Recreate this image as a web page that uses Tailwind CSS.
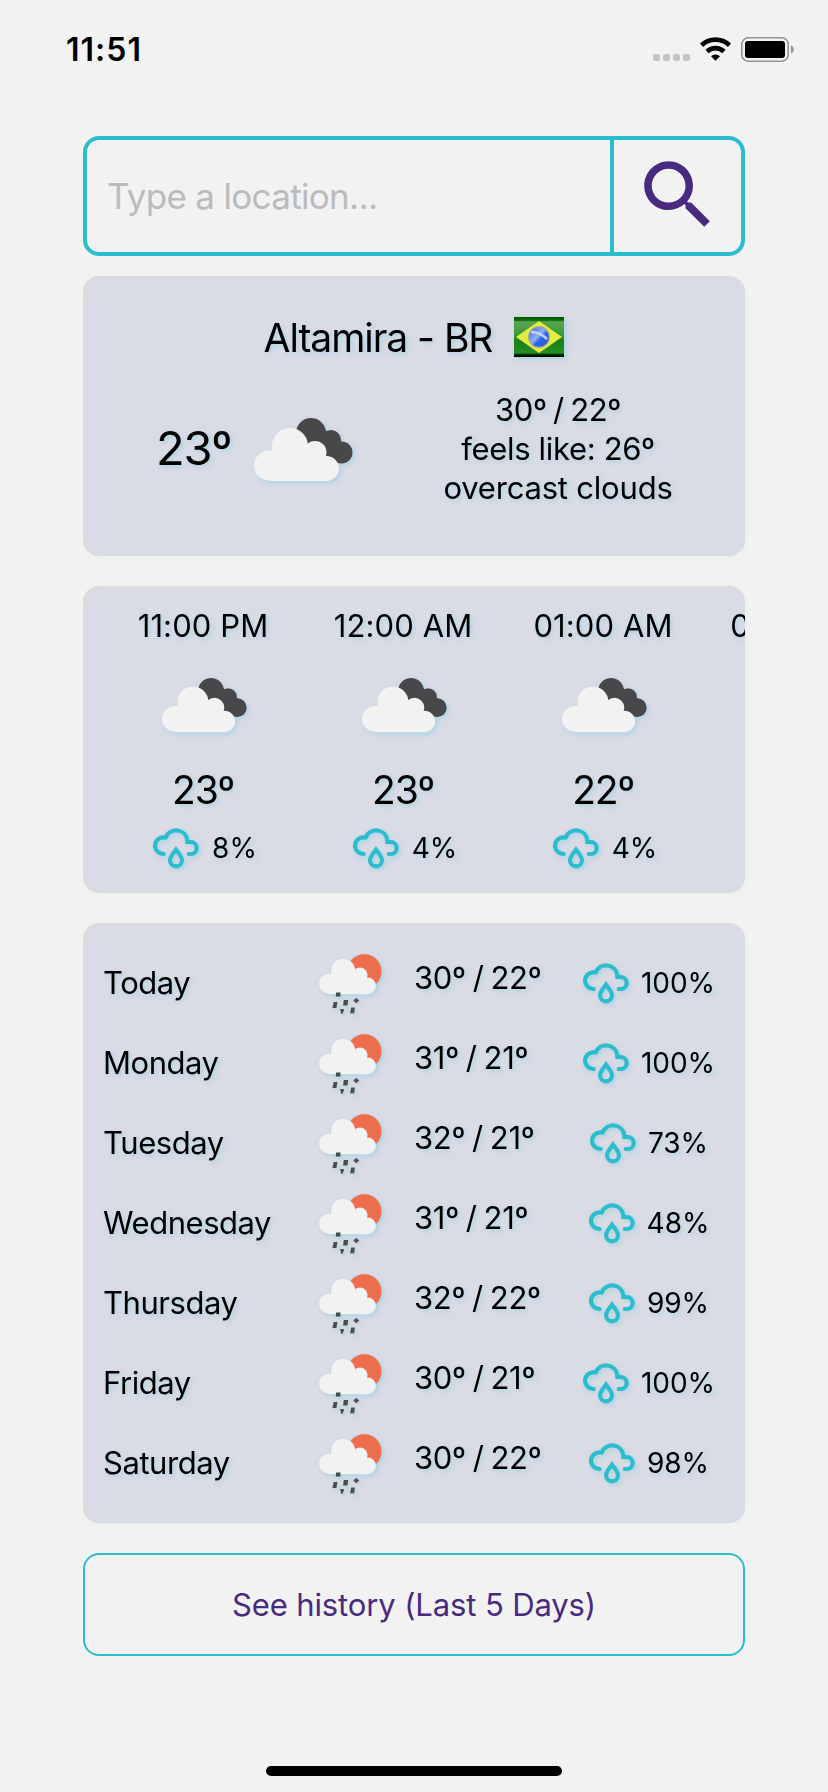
<!DOCTYPE html>
<html lang="en">
<head>
<meta charset="utf-8">
<title>Weather</title>
<script src="https://cdn.jsdelivr.net/npm/@tailwindcss/browser@4"></script>
</head>
<body class="bg-[#f2f2f2]">
<svg class="hidden">
  <symbol id="cloud" viewBox="0 0 100 64">
    <circle cx="15" cy="47.5" r="15"/><circle cx="36" cy="28" r="18"/><circle cx="61" cy="34.5" r="11.5"/><circle cx="72.5" cy="50.5" r="12.5"/>
    <path d="M15 63H73L71 38 60 28 36 26 15 34z"/>
  </symbol>
  <symbol id="overcast" viewBox="0 0 100 64">
    <g fill="#48484a"><circle cx="57" cy="15" r="15"/><circle cx="77" cy="22" r="10"/><circle cx="87.5" cy="34.500" r="11"/><path d="M57 2L71 12 86 22 90 26 86 45 74 40 50 26z"/></g>
    <use href="#cloud" width="100" height="64" fill="#f2f2f2"/>
  </symbol>
  <symbol id="sunrain" viewBox="0 0 100 100">
    <circle cx="67.6" cy="29" r="25.7" fill="#ec6e4c"/>
    <use href="#cloud" width="100" height="64" fill="#f2f2f2"/>
    <g fill="#4c4c4f"><path d="M25.500 60.500h6.500v6h-7zM22 74.500h5.500l-1.500 9h-6zM37 71.500h6.500l-1 8.500h-6.500zM54 69h3v2h2.500v3h-2.500v2h-3v-2h-2.500v-3h2.500zM31.500 85h5.500v3l-2 4h-2zM48 83h5.500l-1 8.500h-6z"/></g>
  </symbol>
  <symbol id="drop" viewBox="0 0 138 126">
    <g fill="none" stroke="#2bbdce" stroke-width="12.500"><path stroke-linecap="round" d="M32 81H31A25 25 0 0 1 31 31H38A34 34 0 0 1 103 40V45H113A18 18 0 0 1 113 81H107"/><path d="M69 68C61 80 51 88 51 100a18 18 0 0 0 36 0C87 88 77 80 69 68z"/></g>
  </symbol>
</svg>
<div class="flex h-[1792px] w-[828px] flex-col items-center overflow-hidden bg-[#f2f2f2] font-['Inter',sans-serif] text-black">
  <div class="flex h-[136px] w-full shrink-0 items-start justify-between pl-[66px] pr-[34px]">
    <div class="mt-[30px] text-[32px] leading-10 font-semibold tracking-[1px]">11:51</div>
    <div class="mt-[37px] flex h-[25px]">
      <div class="mt-[17px] mr-[10px] flex gap-[3px]"><i class="size-[7px] rounded-[2px] bg-[#c4c4c4]"></i><i class="size-[7px] rounded-[2px] bg-[#c4c4c4]"></i><i class="size-[7px] rounded-[2px] bg-[#c4c4c4]"></i><i class="size-[7px] rounded-[2px] bg-[#c4c4c4]"></i></div>
      <svg class="mr-[10px] h-6 w-[31px]" viewBox="0 0 31 24"><g fill="none" stroke="#000" stroke-width="4.600"><path d="M1.500 8.200A20.500 20.500 0 0 1 29.500 8.200"/><path d="M7 14.500A12.400 12.400 0 0 1 24 14.500"/></g><path d="M11 19.300A6.600 6.600 0 0 1 20 19.300L15.500 23.800z"/></svg>
      <svg class="h-[25px] w-[53px]" viewBox="0 0 53 25"><rect x=".8" y=".8" width="46.400" height="23.400" rx="6.500" fill="none" stroke="#939393" stroke-width="1.600"/><rect x="4" y="4" width="40" height="17" rx="3"/><path d="M50 8.500a4 4.200 0 0 1 0 8z" fill="#939393"/></svg>
    </div>
  </div>
  <div class="flex h-[120px] w-[662px] shrink-0 rounded-[16px] border-4 border-[#2bbdce]">
    <div class="flex w-[523px] items-center pl-[20px] text-[35px] tracking-[-0.68px] text-[#bbbbbd]">Type a location...</div>
    <div class="flex flex-1 justify-center border-l-4 border-[#2bbdce] pt-[10px]">
      <svg class="size-[90px]" viewBox="0 0 24 24" fill="#482b80"><path d="M15.500 14h-.79l-.28-.27C15.410 12.590 16 11.110 16 9.500 16 5.910 13.090 3 9.500 3S3 5.910 3 9.500 5.910 16 9.500 16c1.610 0 3.090-.59 4.230-1.570l.27.28v.79l5 4.990L20.490 19l-4.990-5zm-6 0C7.010 14 5 11.990 5 9.500S7.010 5 9.500 5 14 7.010 14 9.500 11.990 14 9.500 14z"/></svg>
    </div>
  </div>

  <section class="mt-5 h-[280px] w-[662px] shrink-0 rounded-[16px] bg-[#d9dbe5] pt-[41px] shadow-[2px_2px_4px_#e9f0f1,inset_4px_4px_6px_#dddae4]">
    <div class="drop-shadow-[2px_2px_2px_#a9d4e2]">
      <div class="flex h-10 items-center justify-center gap-[22px]">
        <span class="mt-[2px] text-[39px] leading-10 tracking-[-1.05px]">Altamira - BR</span>
        <svg class="h-10 w-[50px]" viewBox="0 0 50 40"><defs><linearGradient id="fg" x2="0" y2="1"><stop offset="0" stop-color="#005a00"/><stop offset=".08" stop-color="#0a6a0a"/><stop offset=".12" stop-color="#5aa552"/><stop offset=".45" stop-color="#389a35"/><stop offset=".6" stop-color="#158015"/><stop offset=".9" stop-color="#2a8d28"/><stop offset=".94" stop-color="#003000"/><stop offset="1" stop-color="#000"/></linearGradient><linearGradient id="fb" x2="1" y2="1"><stop offset="0" stop-color="#3a62d8"/><stop offset=".45" stop-color="#8fb0f4"/><stop offset=".6" stop-color="#2f62ee"/><stop offset="1" stop-color="#2d55d8"/></linearGradient></defs><rect width="50" height="40" fill="url(#fg)"/><path d="M2 20L25 4 48 20 25 36z" fill="#e3ee38"/><circle cx="25" cy="20" r="11" fill="#9aa6a8"/><circle cx="25" cy="20" r="9.800" fill="url(#fb)"/><path d="M17 15q9 0 16 7" fill="none" stroke="#c3d4fa" stroke-width="2.500"/></svg>
      </div>
      <div class="mt-[33px] flex h-[117px] items-center">
        <span class="ml-[73px] mb-[2px] w-[98px] text-[47px] leading-none tracking-[-1.2px]">23º</span>
        <svg class="mt-[2px] h-[64px] w-[100px]"><use href="#overcast"/></svg>
        <div class="ml-[54px] w-[300px] text-center text-[31px] leading-[39px]"><p class="tracking-[-0.35px] [word-spacing:-2px]">30º / 22º</p><p class="tracking-[-0.33px]">feels like: 26º</p><p class="tracking-[-0.2px]">overcast clouds</p></div>
      </div>
    </div>
  </section>

  <section class="mt-[30px] h-[307px] w-[662px] shrink-0 overflow-hidden rounded-[16px] bg-[#d9dbe5] shadow-[2px_2px_4px_#e9f0f1,inset_4px_4px_6px_#dddae4]">
    <div id="hours" class="ml-5 flex w-[800px] drop-shadow-[2px_2px_2px_#a9d4e2]"></div>
  </section>

  <section id="days" class="mt-[30px] h-[600px] w-[662px] shrink-0 rounded-[16px] bg-[#d9dbe5] pt-5 shadow-[2px_2px_4px_#e9f0f1,inset_4px_4px_6px_#dddae4]"></section>

  <button class="mt-[30px] h-[103px] w-[662px] shrink-0 rounded-[16px] border-2 border-[#2bbdce] pt-[2px] text-[31px] tracking-[-0.12px] text-[#482b80]">See history (Last 5 Days)</button>
  <div class="mt-auto mb-4 h-[10px] w-[296px] shrink-0 rounded-full bg-black"></div>
</div>
<script>
const hours = [["11:00 PM","23º","8%"],["12:00 AM","23º","4%"],["01:00 AM","22º","4%"],["02:00 AM","22º","4%"]];
document.getElementById("hours").innerHTML = hours.map(([t,d,p]) => `
  <div class="flex w-[200px] flex-col items-center">
    <span class="mt-[20px] text-[31px] leading-10 tracking-[0.1px]">${t}</span>
    <svg class="mt-[32px] ml-[4px] h-[55px] w-[86px]"><use href="#overcast"/></svg>
    <span class="mt-[37px] text-[39px] leading-10 tracking-[-1.2px]">${d}</span>
    <div class="mt-[17px] flex h-[42px] items-center gap-[13px] pl-[4px]"><svg class="h-[42px] w-[46px]"><use href="#drop"/></svg><span class="text-[28px] leading-none">${p}</span></div>
  </div>`).join("");
const days = [["Today","30º / 22º","100%"],["Monday","31º / 21º","100%"],["Tuesday","32º / 21º","73%"],["Wednesday","31º / 21º","48%"],["Thursday","32º / 22º","99%"],["Friday","30º / 21º","100%"],["Saturday","30º / 22º","98%"]];
document.getElementById("days").innerHTML = days.map(([n,t,p]) => `
  <div class="flex h-20 items-center pl-5 drop-shadow-[2px_2px_2px_#a9d4e2]">
    <span class="w-[216px] text-[31px] leading-10 tracking-[-0.45px]">${n}</span>
    <svg class="mt-[5px] size-[67px]"><use href="#sunrain"/></svg>
    <span class="mb-[10px] ml-[28px] w-[154px] text-[31px] leading-10 tracking-[-0.3px] [word-spacing:-1.5px]">${t}</span>
    <div class="flex w-[162px] items-center justify-center gap-[12px]"><svg class="h-[42px] w-[46px]"><use href="#drop"/></svg><span class="text-[28px] leading-none">${p}</span></div>
  </div>`).join("");
</script>
</body>
</html>
